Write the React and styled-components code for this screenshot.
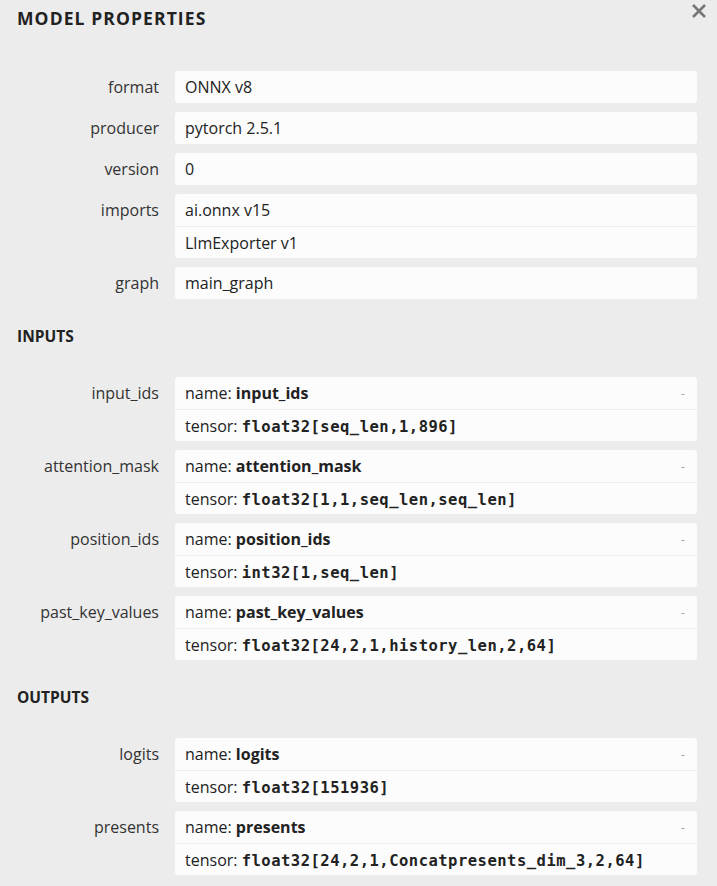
import React from "react";
import styled, { createGlobalStyle } from "styled-components";

const GlobalStyle = createGlobalStyle`
  html, body {
    margin: 0;
    padding: 0;
    background: #ececec;
  }
  body {
    font-family: "Open Sans", "Noto Sans", "DejaVu Sans", sans-serif;
    color: #222;
  }
`;

const Panel = styled.div`
  width: 717px;
  height: 886px;
  overflow: hidden;
  box-sizing: border-box;
  padding: 0 20px 0 17px;
`;

const Header = styled.div`
  display: flex;
  align-items: center;
  justify-content: space-between;
  height: 24px;
  margin-top: 6px;
  margin-bottom: 41px;
`;

const Title = styled.div`
  font-size: 17.5px;
  font-weight: 700;
  letter-spacing: 1.1px;
  color: #222;
`;

const CloseButton = styled.div`
  width: 16px;
  height: 16px;
  margin-top: -16px;
  margin-right: -10px;
  cursor: pointer;
`;

const SectionTitle = styled.div`
  font-size: 15.5px;
  font-weight: 700;
  line-height: 20px;
  margin-top: 27px;
  margin-bottom: 31px;
  color: #222;
`;

const Row = styled.div`
  display: flex;
  align-items: flex-start;
  margin-bottom: 9px;
`;

const Label = styled.div`
  width: 142px;
  flex: none;
  margin-right: 16px;
  text-align: right;
  font-size: 16px;
  line-height: 32px;
  color: #333;
`;

const Box = styled.div`
  flex: 1;
  background: #fcfcfc;
  border-radius: 3px;
  overflow: hidden;
`;

const Line = styled.div`
  display: flex;
  align-items: center;
  justify-content: space-between;
  box-sizing: border-box;
  height: 32px;
  padding: 0 12px 0 10px;
  font-size: 16px;
  color: #222;
  border-top: ${(p) => (p.$divided ? "1px solid #ececec" : "none")};
`;

const Key = styled.span`
  font-weight: 400;
`;

const Strong = styled.b`
  font-weight: 700;
`;

const Mono = styled.code`
  font-family: "DejaVu Sans Mono", "Liberation Mono", monospace;
  font-weight: 700;
  font-size: 15.5px;
  letter-spacing: 0.5px;
`;

const Toggle = styled.span`
  color: #aaa;
  font-size: 13px;
`;

const properties = [
  { name: "format", values: ["ONNX v8"] },
  { name: "producer", values: ["pytorch 2.5.1"] },
  { name: "version", values: ["0"] },
  { name: "imports", values: ["ai.onnx v15", "LlmExporter v1"] },
  { name: "graph", values: ["main_graph"] },
];

const inputs = [
  { name: "input_ids", type: "float32[seq_len,1,896]" },
  { name: "attention_mask", type: "float32[1,1,seq_len,seq_len]" },
  { name: "position_ids", type: "int32[1,seq_len]" },
  { name: "past_key_values", type: "float32[24,2,1,history_len,2,64]" },
];

const outputs = [
  { name: "logits", type: "float32[151936]" },
  { name: "presents", type: "float32[24,2,1,Concatpresents_dim_3,2,64]" },
];

function CloseIcon() {
  return (
    <svg width="16" height="16" viewBox="0 0 16 16">
      <path d="M2 2 L14 14 M14 2 L2 14" stroke="#777" strokeWidth="2.6" strokeLinecap="butt" />
    </svg>
  );
}

function Argument({ item }) {
  return (
    <Row>
      <Label>{item.name}</Label>
      <Box>
        <Line>
          <span>
            <Key>name: </Key>
            <Strong>{item.name}</Strong>
          </span>
          <Toggle>-</Toggle>
        </Line>
        <Line $divided>
          <span>
            <Key>tensor: </Key>
            <Mono>{item.type}</Mono>
          </span>
        </Line>
      </Box>
    </Row>
  );
}

export default function App() {
  return (
    <>
      <GlobalStyle />
      <Panel>
        <Header>
          <Title>MODEL PROPERTIES</Title>
          <CloseButton>
            <CloseIcon />
          </CloseButton>
        </Header>
        {properties.map((p) => (
          <Row key={p.name}>
            <Label>{p.name}</Label>
            <Box>
              {p.values.map((v, i) => (
                <Line key={v} $divided={i > 0}>
                  {v}
                </Line>
              ))}
            </Box>
          </Row>
        ))}
        <SectionTitle>INPUTS</SectionTitle>
        {inputs.map((a) => (
          <Argument key={a.name} item={a} />
        ))}
        <SectionTitle>OUTPUTS</SectionTitle>
        {outputs.map((a) => (
          <Argument key={a.name} item={a} />
        ))}
      </Panel>
    </>
  );
}
